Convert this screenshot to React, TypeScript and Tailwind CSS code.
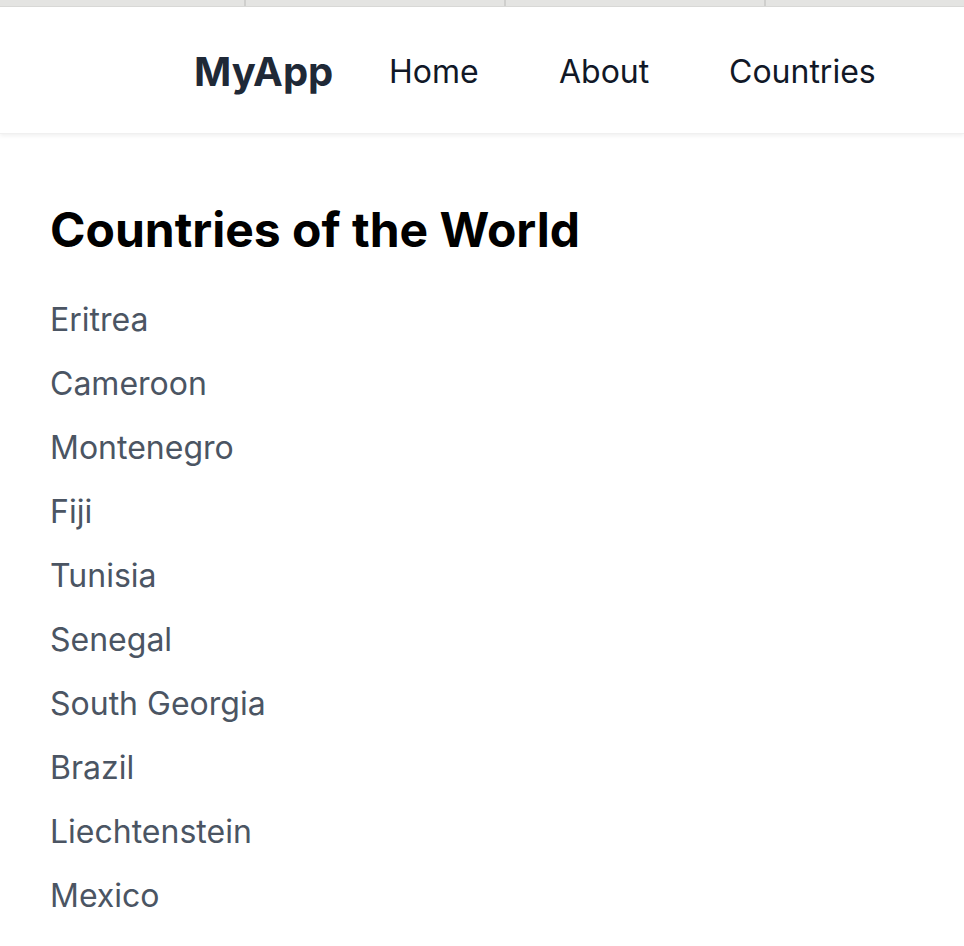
import React from "react";

const countries = [
  "Eritrea",
  "Cameroon",
  "Montenegro",
  "Fiji",
  "Tunisia",
  "Senegal",
  "South Georgia",
  "Brazil",
  "Liechtenstein",
  "Mexico",
];

export default function App() {
  return (
    <div
      className="min-h-[946px] bg-white"
      style={{ fontFamily: "Inter, 'Noto Sans', sans-serif" }}
    >
      <div className="flex h-[7px] bg-[#e4e4e2] border-b border-[#d9d9d7]">
        <div className="w-[244px]" />
        <div className="w-[260px] border-l-2 border-[#cfcfcd]" />
        <div className="w-[260px] border-l-2 border-[#cfcfcd]" />
        <div className="flex-1 border-l-2 border-[#cfcfcd]" />
      </div>
      <header className="flex h-[127px] items-center bg-white pl-[194px] pt-[4px] shadow-[0_2px_4px_rgba(0,0,0,0.06)] border-b border-[#f0f0f0]">
        <div className="text-[40px] font-bold leading-[56px] text-[#1f2937] w-[195px]">
          MyApp
        </div>
        <nav className="flex text-[32px] leading-[48px] text-[#111827]">
          <a className="w-[170px]">Home</a>
          <a className="w-[170px]">About</a>
          <a>Countries</a>
        </nav>
      </header>
      <main className="px-[50px] pt-[64px]">
        <h1 className="text-[48px] font-bold leading-[64px] text-black mb-[26px]">
          Countries of the World
        </h1>
        <ul className="flex flex-col">
          {countries.map((c) => (
            <li key={c} className="py-[8px] text-[32px] leading-[48px] text-[#4b5563]">
              {c}
            </li>
          ))}
        </ul>
      </main>
    </div>
  );
}
